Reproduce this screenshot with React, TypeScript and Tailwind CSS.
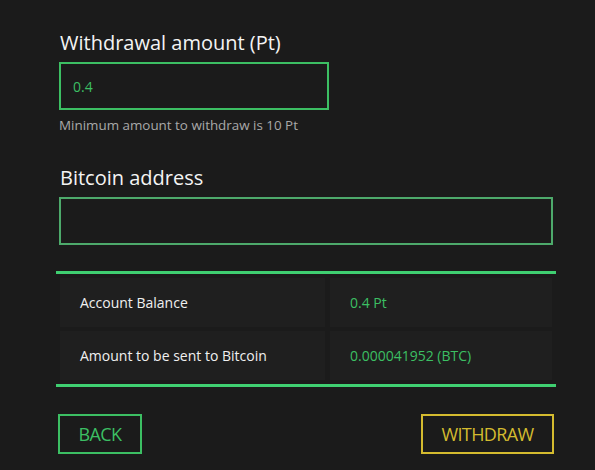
export default function App() {
  return (
    <div className="w-[595px] h-[470px] bg-[#1b1b1b] overflow-hidden font-['Open_Sans',sans-serif]">
      <div className="pl-[59px] pr-[42px] pt-[28px]">
        <h2 className="text-[20px] leading-[30px] text-[#f4f4f4] pl-[1px]">Withdrawal amount (Pt)</h2>
        <div className="mt-[4px] w-[270px] h-[48px] border-2 border-[#3cbf63] flex items-center pl-[12px]">
          <span className="text-[14px] text-[#3cbf63]">0.4</span>
        </div>
        <p className="mt-[6px] text-[13.4px] leading-[18px] text-[#a9a9a9]">Minimum amount to withdraw is 10 Pt</p>

        <h2 className="mt-[29px] text-[20px] leading-[30px] text-[#f4f4f4] pl-[1px]">Bitcoin address</h2>
        <div className="mt-[4px] w-[494px] h-[48px] border-2 border-[#4daa6b]"></div>
      </div>

      <div className="ml-[56px] w-[500px] mt-[26px] border-t-[3px] border-b-[3px] border-[#3fcf71] py-[4px]">
        <div className="flex flex-col gap-[4px] px-[4px]">
          <div className="flex gap-[5px] h-[49px]">
            <div className="w-[265px] bg-[#1f1f1f] flex items-center pl-[20px] text-[14px] text-[#f0f0f0]">Account Balance</div>
            <div className="flex-1 bg-[#1f1f1f] flex items-center pl-[20px] text-[14px] text-[#3cbf63]">0.4 Pt</div>
          </div>
          <div className="flex gap-[5px] h-[49px]">
            <div className="w-[265px] bg-[#1f1f1f] flex items-center pl-[20px] text-[14px] text-[#f0f0f0]">Amount to be sent to Bitcoin</div>
            <div className="flex-1 bg-[#1f1f1f] flex items-center pl-[20px] text-[14px] text-[#3cbf63]">0.000041952 (BTC)</div>
          </div>
        </div>
      </div>

      <div className="flex justify-between pl-[58px] pr-[41px] mt-[27px]">
        <button className="w-[84px] h-[40px] border-2 border-[#3cbf63] text-[#3cbf63] text-[18px] tracking-[-0.6px]">BACK</button>
        <button className="w-[133px] h-[40px] border-2 border-[#d4bb2f] text-[#d4bb2f] text-[18px] tracking-[-0.6px]">WITHDRAW</button>
      </div>
    </div>
  );
}
